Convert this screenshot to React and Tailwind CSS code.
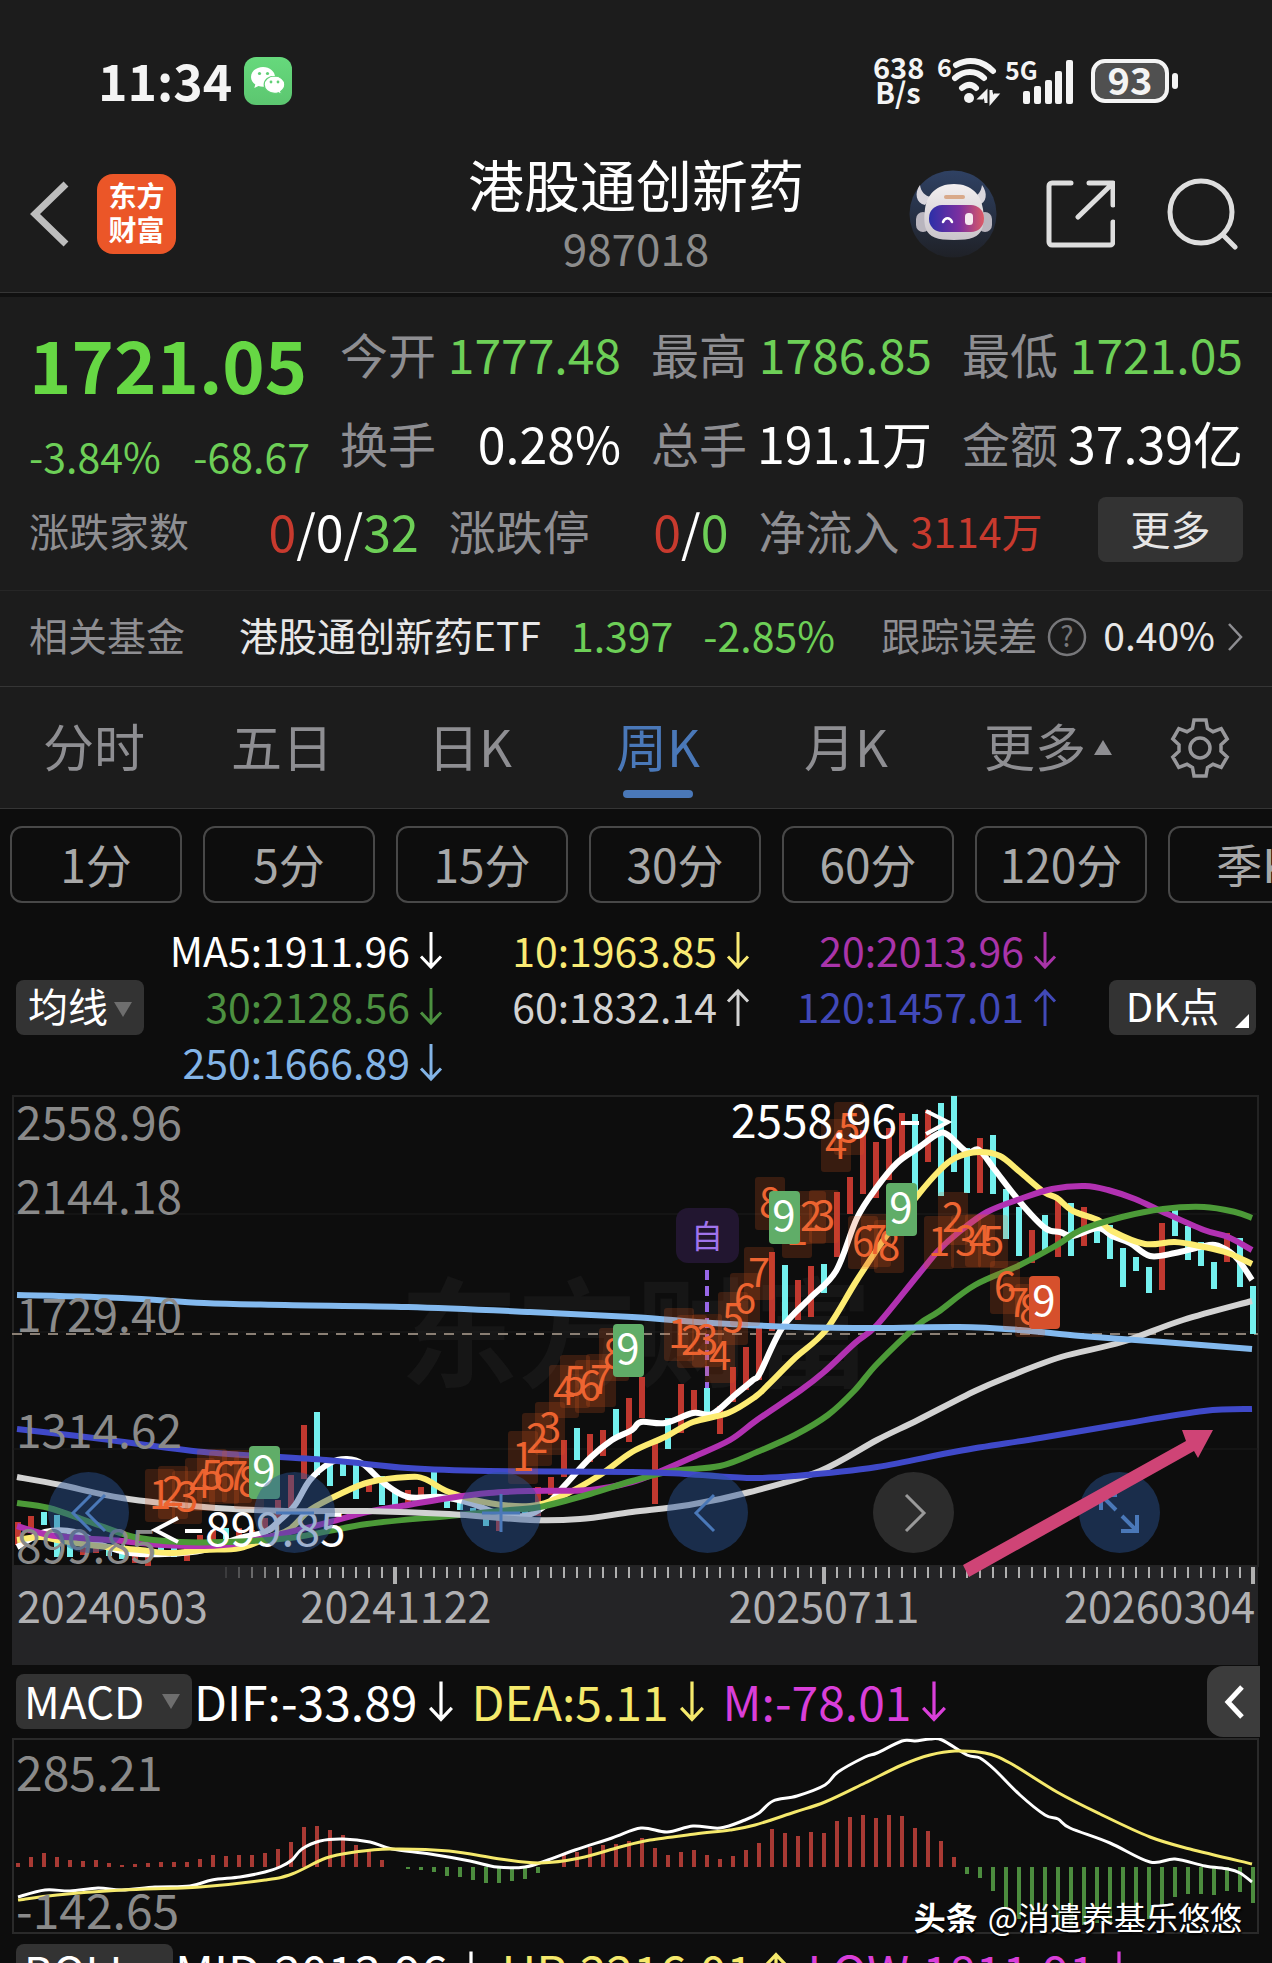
import React from "react";

const STEP = 13;
const barX = (i) => 18 + STEP * i;

/* [index, high, low, rising] */
const CANDLES = [
  [0, 1522, 1545, 1], [1, 1516, 1533, 1], [2, 1512, 1525, 0], [3, 1515, 1557, 0], [4, 1530, 1557, 0],
  [5, 1535, 1555, 1], [6, 1545, 1553, 1], [7, 1545, 1556, 0], [8, 1545, 1559, 0], [9, 1550, 1563, 1],
  [10, 1548, 1566, 1], [11, 1545, 1555, 0], [12, 1548, 1557, 0], [13, 1545, 1561, 1], [14, 1535, 1553, 1],
  [15, 1530, 1548, 1], [16, 1528, 1541, 0], [17, 1528, 1540, 1], [18, 1530, 1540, 1], [19, 1518, 1530, 1],
  [20, 1500, 1522, 1], [21, 1475, 1510, 1], [22, 1425, 1479, 1], [23, 1412, 1475, 0], [24, 1460, 1486, 0],
  [25, 1460, 1476, 0], [26, 1462, 1499, 0], [27, 1480, 1492, 1], [28, 1476, 1505, 0], [29, 1490, 1506, 0],
  [30, 1490, 1507, 1], [31, 1487, 1500, 1], [32, 1472, 1500, 0], [33, 1500, 1508, 0], [34, 1500, 1510, 0],
  [35, 1508, 1518, 0], [36, 1512, 1526, 0], [37, 1515, 1531, 1], [39, 1508, 1515, 0], [40, 1487, 1516, 1],
  [41, 1477, 1495, 1], [42, 1440, 1477, 1], [43, 1428, 1460, 0], [44, 1434, 1462, 1], [45, 1430, 1456, 1],
  [46, 1409, 1438, 0], [47, 1398, 1442, 1], [48, 1377, 1418, 1], [49, 1443, 1504, 1], [50, 1418, 1449, 0],
  [51, 1384, 1433, 1], [52, 1390, 1413, 1], [53, 1388, 1413, 0], [54, 1406, 1434, 1], [55, 1367, 1402, 1],
  [56, 1347, 1390, 1], [57, 1327, 1380, 1], [58, 1252, 1331, 1], [59, 1265, 1325, 0], [60, 1280, 1320, 1],
  [61, 1266, 1317, 1], [62, 1264, 1293, 0], [63, 1192, 1257, 1], [64, 1177, 1214, 1], [65, 1130, 1194, 1],
  [66, 1142, 1198, 1], [67, 1128, 1180, 1], [68, 1113, 1160, 1], [69, 1114, 1195, 0], [70, 1110, 1162, 1],
  [71, 1103, 1196, 0], [72, 1096, 1172, 0], [73, 1148, 1193, 0], [74, 1138, 1193, 1], [75, 1135, 1194, 0],
  [76, 1189, 1239, 0], [77, 1207, 1256, 0], [78, 1230, 1263, 1], [79, 1215, 1252, 0], [80, 1197, 1257, 1],
  [81, 1203, 1256, 0], [82, 1207, 1246, 1], [83, 1223, 1243, 0], [84, 1225, 1259, 0], [85, 1248, 1287, 0],
  [86, 1257, 1271, 0], [87, 1267, 1293, 0], [88, 1223, 1290, 1], [89, 1207, 1236, 0], [90, 1226, 1260, 0],
  [91, 1242, 1266, 0], [92, 1262, 1289, 0], [93, 1233, 1262, 1], [94, 1238, 1287, 0], [95, 1286, 1334, 0],
];

const AVERAGES = [
  { name: "5", color: "#ffffff", points: [[17, 1547], [45, 1532], [75, 1532], [102, 1545], [130, 1553], [165, 1554], [204, 1550], [240, 1538], [265, 1532], [280, 1520], [295, 1505], [310, 1480], [330, 1463], [347, 1459], [363, 1464], [385, 1484], [408, 1497], [440, 1497], [470, 1503], [500, 1514], [525, 1516], [545, 1506], [565, 1485], [590, 1458], [612, 1440], [632, 1430], [641, 1422], [665, 1423], [693, 1413], [712, 1414], [735, 1395], [753, 1380], [760, 1373], [782, 1328], [810, 1298], [836, 1271], [857, 1218], [877, 1187], [897, 1163], [918, 1148], [938, 1134], [948, 1135], [967, 1152], [979, 1150], [995, 1170], [1020, 1202], [1045, 1228], [1060, 1232], [1073, 1236], [1098, 1228], [1112, 1236], [1130, 1243], [1150, 1256], [1175, 1253], [1200, 1247], [1215, 1245], [1230, 1252], [1240, 1262], [1252, 1280]] },
  { name: "10", color: "#fdec72", points: [[17, 1540], [40, 1537], [57, 1540], [98, 1546], [140, 1550], [170, 1553], [204, 1550], [240, 1548], [270, 1537], [290, 1529], [310, 1510], [340, 1494], [370, 1482], [408, 1477], [425, 1479], [449, 1492], [489, 1503], [530, 1506], [560, 1497], [600, 1475], [632, 1452], [665, 1437], [693, 1422], [728, 1413], [755, 1397], [768, 1385], [795, 1358], [826, 1330], [857, 1280], [887, 1235], [918, 1195], [938, 1172], [955, 1158], [979, 1152], [1000, 1156], [1020, 1172], [1044, 1192], [1057, 1198], [1073, 1211], [1098, 1220], [1112, 1231], [1145, 1244], [1175, 1242], [1204, 1247], [1228, 1253], [1252, 1264]] },
  { name: "20", color: "#b131b1", points: [[17, 1526], [49, 1535], [80, 1538], [122, 1541], [163, 1545], [204, 1546], [240, 1543], [290, 1532], [330, 1522], [367, 1512], [408, 1505], [449, 1498], [489, 1493], [530, 1491], [590, 1490], [632, 1482], [661, 1471], [693, 1457], [730, 1440], [757, 1420], [801, 1390], [824, 1372], [855, 1343], [877, 1325], [918, 1275], [938, 1251], [959, 1232], [987, 1212], [1020, 1199], [1052, 1189], [1085, 1186], [1108, 1190], [1135, 1199], [1163, 1212], [1204, 1230], [1228, 1237], [1252, 1250]] },
  { name: "30", color: "#4c9a38", points: [[17, 1503], [49, 1508], [90, 1522], [134, 1537], [180, 1542], [224, 1542], [290, 1538], [367, 1524], [449, 1516], [510, 1510], [540, 1507], [590, 1494], [632, 1481], [672, 1471], [720, 1466], [757, 1452], [795, 1435], [828, 1415], [855, 1390], [877, 1364], [918, 1325], [938, 1312], [975, 1285], [1020, 1265], [1057, 1245], [1081, 1230], [1122, 1217], [1163, 1209], [1204, 1207], [1235, 1212], [1252, 1218]] },
  { name: "60", color: "#d2d2d2", points: [[17, 1477], [61, 1485], [122, 1498], [204, 1507], [286, 1511], [367, 1511], [449, 1514], [530, 1520], [580, 1519], [632, 1512], [689, 1505], [750, 1492], [820, 1471], [877, 1440], [918, 1420], [975, 1391], [1010, 1376], [1061, 1357], [1122, 1342], [1183, 1320], [1252, 1301]] },
  { name: "120", color: "#3f49c9", points: [[17, 1429], [102, 1439], [204, 1452], [326, 1460], [408, 1468], [489, 1471], [632, 1472], [685, 1474], [750, 1478], [795, 1476], [877, 1467], [959, 1451], [1040, 1438], [1122, 1424], [1204, 1411], [1252, 1409]] },
  { name: "250", color: "#83b9ee", points: [[17, 1295], [122, 1298], [204, 1303], [285, 1305], [408, 1307], [530, 1312], [632, 1317], [712, 1323], [795, 1327], [877, 1328], [959, 1327], [1020, 1330], [1081, 1336], [1163, 1342], [1252, 1349]] },
];

/* [digit, x, y] of the nine-turn counters */
const COUNTS = [
  [1, 160, 1495], [2, 173, 1492], [3, 187, 1497], [4, 200, 1484], [5, 212, 1475], [6, 224, 1477], [7, 237, 1476], [8, 249, 1482],
  [1, 523, 1457], [2, 537, 1439], [3, 550, 1428], [4, 564, 1391], [5, 575, 1381], [6, 590, 1386], [7, 601, 1380], [8, 614, 1354],
  [1, 679, 1334], [2, 692, 1341], [3, 707, 1340], [4, 720, 1356], [5, 733, 1318], [6, 745, 1299], [7, 759, 1273], [8, 770, 1203],
  [1, 797, 1231], [2, 811, 1217], [3, 824, 1216], [4, 836, 1145], [5, 849, 1128], [6, 863, 1242], [7, 876, 1240], [8, 889, 1246],
  [1, 939, 1242], [2, 953, 1218], [3, 966, 1241], [4, 980, 1240], [5, 993, 1241], [6, 1005, 1287], [7, 1018, 1303], [8, 1030, 1310],
];
const NINES = [
  [264, 1472, "#60ad68"], [628, 1350, "#60ad68"], [784, 1217, "#60ad68"], [901, 1209, "#60ad68"], [1044, 1302, "#d6502c"],
];

const MACD_BARS = [
  4, 10, 14, 10, 7, 6, 7, 4, 2, 3, 4, 5, 5, 5, 8, 12, 11, 12, 12, 14, 18, 25, 40, 41, 37, 32, 22, 18, 7, 0, -2, -3,
  -5, -9, -10, -13, -16, -16, -14, -12, -6, 0, 12, 15, 20, 22, 23, 26, 29, 19, 12, 15, 17, 12, 8, 11, 17, 24, 38, 34,
  31, 35, 34, 46, 50, 52, 49, 52, 51, 39, 36, 26, 10, -7, -11, -24, -40, -52, -55, -58, -60, -60, -58, -56, -55, -54,
  -53, -52, -38, -30, -27, -27, -28, -24, -25, -36,
];
const DIF = [[18, 1897], [45, 1890], [70, 1891], [98, 1888], [122, 1890], [155, 1887], [190, 1886], [212, 1880], [240, 1877], [265, 1872], [280, 1867], [292, 1860], [302, 1849], [320, 1841], [343, 1839], [370, 1842], [392, 1849], [430, 1854], [470, 1861], [497, 1867], [525, 1867], [548, 1860], [575, 1850], [612, 1838], [641, 1828], [667, 1832], [693, 1826], [720, 1828], [745, 1820], [759, 1813], [773, 1801], [797, 1796], [825, 1785], [838, 1772], [865, 1757], [877, 1753], [902, 1741], [915, 1741], [930, 1739], [942, 1740], [967, 1755], [980, 1758], [995, 1770], [1020, 1795], [1045, 1815], [1058, 1819], [1070, 1828], [1110, 1843], [1150, 1862], [1175, 1859], [1205, 1866], [1228, 1869], [1240, 1873], [1252, 1882]];
const DEA = [[18, 1900], [57, 1895], [122, 1890], [200, 1887], [265, 1880], [292, 1874], [326, 1858], [355, 1852], [390, 1849], [449, 1851], [500, 1859], [540, 1863], [580, 1858], [620, 1847], [650, 1840], [695, 1834], [730, 1830], [755, 1825], [795, 1812], [825, 1802], [865, 1783], [902, 1765], [930, 1755], [955, 1751], [985, 1753], [1010, 1763], [1057, 1792], [1100, 1814], [1150, 1837], [1190, 1849], [1252, 1864]];

/* Catmull-Rom spline through the points */
function curve(p) {
  let d = `M${p[0][0]} ${p[0][1]}`;
  for (let i = 0; i < p.length - 1; i++) {
    const a = p[i - 1] || p[i];
    const b = p[i];
    const c = p[i + 1];
    const e = p[i + 2] || c;
    d += `C${(b[0] + (c[0] - a[0]) / 6).toFixed(1)} ${(b[1] + (c[1] - a[1]) / 6).toFixed(1)} ${(c[0] - (e[0] - b[0]) / 6).toFixed(1)} ${(c[1] - (e[1] - b[1]) / 6).toFixed(1)} ${c[0]} ${c[1]}`;
  }
  return d;
}

function Arrow({ up = false, big = false }) {
  return (
    <svg viewBox="0 0 24 38" className={big ? "h-[42px] w-[26px] shrink-0" : "h-[38px] w-6 shrink-0"} fill="none" stroke="currentColor" strokeWidth="3">
      <path d={up ? "M12 38V3M2 13.500L12 3l10 10.500" : "M12 0v35M2 24.500L12 35l10-10.500"} />
    </svg>
  );
}

function StatusBar() {
  return (
    <div className="flex items-center justify-between pt-14 pr-[94px] pl-[98px] text-[#f4f4f4]">
      <div className="flex h-[50px] items-center gap-3">
        <span className="-mt-1 text-[50px] leading-[50px] font-bold">11:34</span>
        <svg viewBox="0 0 48 48" className="size-12">
          <defs>
            <linearGradient id="wx" x1="0" y1="0" x2="0" y2="1">
              <stop offset="0" stopColor="#66d97c" />
              <stop offset="1" stopColor="#5cc670" />
            </linearGradient>
          </defs>
          <rect width="48" height="48" rx="12" fill="url(#wx)" />
          <path d="M19 10c-6.700 0-12 4.400-12 9.900 0 3 1.700 5.700 4.300 7.500l-1 3.600 4.200-2c1.400.5 2.900.7 4.500.7 6.700 0 12-4.400 12-9.800S25.700 10 19 10z" fill="#fff" />
          <path d="M30.500 19c-5.700 0-10.300 3.800-10.300 8.600s4.600 8.700 10.300 8.700c1.300 0 2.600-.2 3.800-.6l3.300 1.800-.9-3c2.500-1.600 4.100-4.100 4.100-6.900 0-4.800-4.600-8.600-10.300-8.600z" fill="#fff" stroke="#60cf75" strokeWidth="1.200" />
          <circle cx="15.500" cy="16.500" r="1.600" fill="#60cf75" /><circle cx="23.500" cy="16.500" r="1.600" fill="#60cf75" />
          <circle cx="27" cy="25" r="1.400" fill="#60cf75" /><circle cx="34" cy="25" r="1.400" fill="#60cf75" />
        </svg>
      </div>
      <div className="flex h-[50px] items-center">
        <div className="-mt-1 flex w-[50px] flex-col text-center text-[29px] leading-[25px] font-bold">
          <span>638</span>
          <span>B/s</span>
        </div>
        <svg viewBox="0 0 62 48" className="ml-[14px] h-12 w-[62px] overflow-visible">
          <text x="0" y="20" fontSize="25" fontWeight="700" fill="#f4f4f4">6</text>
          <g fill="none" stroke="#f4f4f4" strokeWidth="6" strokeLinecap="round">
            <path d="M19 8c12-7 26-5 37 6" />
            <path d="M18 21c9-8 21-8 29 0" />
            <path d="M25 31c5-4 10-4 14 0" />
          </g>
          <circle cx="32" cy="41" r="5" fill="#f4f4f4" />
          <path d="M49 46V35l-6 6h3" stroke="#f4f4f4" strokeWidth="3" fill="#f4f4f4" />
          <path d="M54 33v12l6-7h-3" stroke="#f4f4f4" strokeWidth="3" fill="#f4f4f4" />
        </svg>
        <svg viewBox="0 0 70 48" className="ml-2 h-12 w-[70px] overflow-visible" fill="#f4f4f4">
          <text x="-2" y="23" fontSize="25" fontWeight="700">5G</text>
          <rect x="16" y="34" width="7" height="13" rx="2" />
          <rect x="27" y="29" width="7" height="18" rx="2" />
          <rect x="38" y="23" width="7" height="24" rx="2" />
          <rect x="48" y="14" width="7" height="33" rx="2" />
          <rect x="59" y="3" width="7" height="44" rx="2" />
        </svg>
        <div className="ml-[14px] flex items-center gap-[3px]">
          <div className="flex h-11 w-[78px] items-center justify-center rounded-[14px] border-4 border-[#f4f4f4] bg-[#505050] text-[38px] leading-9 font-bold">
            <span className="-mt-1">93</span>
          </div>
          <div className="h-4 w-[6px] rounded-full bg-[#f4f4f4]" />
        </div>
      </div>
    </div>
  );
}

function Header() {
  return (
    <header className="grid h-[187px] grid-cols-[1fr_auto_1fr] items-center border-b border-[#353535] pt-[30px]">
      <div className="flex items-center gap-7 pl-[30px]">
        <button type="button" aria-label="返回">
          <svg viewBox="0 0 39 66" className="h-[66px] w-[39px]" fill="none" stroke="#bdbdbd" strokeWidth="7">
            <path d="M36 3L5 33l31 30" />
          </svg>
        </button>
        <div className="flex h-20 w-[79px] flex-col items-center justify-center rounded-[16px] bg-[#eb5628] pb-1 text-[28px] leading-[34px] font-bold text-white">
          <span>东方</span>
          <span>财富</span>
        </div>
      </div>
      <div className="flex flex-col items-center">
        <h1 className="text-[56px] leading-[66px] text-white">港股通创新药</h1>
        <span className="text-[44px] leading-[62px] text-[#8c8c8c]">987018</span>
      </div>
      <div className="flex items-center justify-end pr-[33px]">
        <button type="button" aria-label="智能助手">
          <svg viewBox="0 0 88 88" className="size-[88px]">
            <defs>
              <linearGradient id="halo" x1="0" y1="0" x2="0" y2="1">
                <stop offset="0" stopColor="#2f4163" />
                <stop offset="1" stopColor="#1f2127" />
              </linearGradient>
              <linearGradient id="visor" x1="0" y1="0" x2="1" y2="0">
                <stop offset="0" stopColor="#2b2fa8" />
                <stop offset=".55" stopColor="#7b2fa0" />
                <stop offset="1" stopColor="#dc5a66" />
              </linearGradient>
              <linearGradient id="shell" x1="0" y1="0" x2="0" y2="1">
                <stop offset="0" stopColor="#f3eff0" />
                <stop offset="1" stopColor="#c9c4ca" />
              </linearGradient>
            </defs>
            <circle cx="44" cy="44" r="43.500" fill="url(#halo)" />
            <path d="M11 15c-6 8-4 18 5 20l6-8c-6-1-10-5-11-12zM73 15c6 8 5 18-4 20l-6-8c6-1 9-5 10-12z" fill="#d9d6dd" />
            <rect x="7" y="42" width="14" height="20" rx="7" fill="#b9b5be" />
            <rect x="69" y="42" width="14" height="20" rx="7" fill="#b9b5be" />
            <path d="M45 14c18 0 27 11 29 25 1 7 1 15-1 20-3 8-11 11-28 11s-25-3-28-11c-2-5-2-13-1-20 2-14 11-25 29-25z" fill="url(#shell)" />
            <rect x="20" y="35" width="55" height="27" rx="13" fill="url(#visor)" />
            <path d="M34 52c2-5 7-5 9 0" stroke="#fff" strokeWidth="2.500" fill="none" strokeLinecap="round" />
            <rect x="56" y="43" width="8" height="12" rx="3.500" fill="#f6e9ef" />
            <path d="M37 27h17" stroke="#d9a98a" strokeWidth="4" strokeLinecap="round" />
          </svg>
        </button>
        <button type="button" aria-label="分享" className="ml-12">
          <svg viewBox="0 0 70 70" className="size-[70px]" fill="none" stroke="#dedede" strokeWidth="5" strokeLinejoin="round" strokeLinecap="round">
            <path d="M26 4H7a3 3 0 0 0-3 3v56a3 3 0 0 0 3 3h58a3 3 0 0 0 3-3V43" />
            <path d="M44 4h24v22M66 6L33 38" />
          </svg>
        </button>
        <button type="button" aria-label="搜索" className="ml-[52px]">
          <svg viewBox="0 0 72 72" className="size-[72px]" fill="none" stroke="#dedede" strokeWidth="5" strokeLinecap="round">
            <circle cx="34" cy="34" r="31" />
            <path d="M56 57l12 12" />
          </svg>
        </button>
      </div>
    </header>
  );
}

function Stat({ label, value, tone, big = false }) {
  return (
    <div className="flex items-center justify-between text-[48px] leading-[60px] whitespace-nowrap">
      <span className="text-[#8e8e92]">{label}</span>
      <span className={(big ? "text-[50px] " : "") + tone}>{value}</span>
    </div>
  );
}

const GREEN = "text-[#6dcf57]";

function Quote() {
  return (
    <section className="border-b border-[#262626] px-[29px] pt-[26px] pb-7">
      <div className="grid grid-cols-4 gap-x-[30px]">
        <div className="flex flex-col">
          <strong className="text-[72px] leading-20 font-bold text-[#66d744]">1721.05</strong>
          <div className="mt-[26px] flex justify-between text-[41px] leading-[52px] text-[#6dcf57]">
            <span>-3.84%</span>
            <span>-68.67</span>
          </div>
        </div>
        <div className="flex flex-col gap-[29px]">
          <Stat label="今开" value="1777.48" tone={GREEN} />
          <Stat label="换手" value="0.28%" tone="text-white" big />
        </div>
        <div className="flex flex-col gap-[29px]">
          <Stat label="最高" value="1786.85" tone={GREEN} />
          <Stat label="总手" value="191.1万" tone="text-white" big />
        </div>
        <div className="flex flex-col gap-[29px]">
          <Stat label="最低" value="1721.05" tone={GREEN} />
          <Stat label="金额" value="37.39亿" tone="text-white" big />
        </div>
      </div>
      <div className="mt-4 grid grid-cols-[390fr_280fr_310fr_145fr] items-center gap-x-[30px] text-[47px] leading-[60px] whitespace-nowrap">
        <div className="flex items-center justify-between">
          <span className="text-[40px] text-[#8e8e92]">涨跌家数</span>
          <span className="text-[50px] text-white"><span className="text-[#c83a2e]">0</span>/0/<span className={GREEN}>32</span></span>
        </div>
        <div className="flex items-center justify-between">
          <span className="text-[#8e8e92]">涨跌停</span>
          <span className="text-[50px] text-white"><span className="text-[#c83a2e]">0</span>/<span className={GREEN}>0</span></span>
        </div>
        <div className="flex items-center gap-[11px]">
          <span className="text-[#8e8e92]">净流入</span>
          <span className="text-[41px] text-[#c83a2e]">3114万</span>
        </div>
        <button type="button" className="h-[65px] rounded-lg bg-[#333333] pb-1 text-[40px] leading-[60px] text-[#e6e6e6]">更多</button>
      </div>
    </section>
  );
}

function FundRow() {
  return (
    <a href="#fund" className="flex h-24 items-center border-b border-[#353535] pr-[29px] pb-2 pl-[29px] text-[39px] whitespace-nowrap">
      <span className="text-[#8e8e92]">相关基金</span>
      <span className="ml-[54px] text-[#e8e8e8]">港股通创新药ETF</span>
      <span className="ml-[30px] text-[41px] text-[#6dcf57]">1.397</span>
      <span className="ml-[30px] text-[41px] text-[#6dcf57]">-2.85%</span>
      <span className="ml-auto text-[#8e8e92]">跟踪误差</span>
      <svg viewBox="0 0 40 40" className="mt-1 ml-[10px] size-10 overflow-visible">
        <circle cx="20" cy="20" r="18" fill="none" stroke="#77777a" strokeWidth="2.500" />
        <text x="20" y="30" fontSize="28" textAnchor="middle" fill="#77777a">?</text>
      </svg>
      <span className="ml-4 text-[#e8e8e8]">0.40%</span>
      <svg viewBox="0 0 16 28" className="mt-1 ml-3 h-7 w-4" fill="none" stroke="#8e8e92" strokeWidth="2.500">
        <path d="M2 1l12 13L2 27" />
      </svg>
    </a>
  );
}

function Tabs() {
  const base = "relative flex h-full items-center justify-center pb-1";
  return (
    <nav className="grid h-[122px] grid-cols-[188fr_188fr_188fr_188fr_188fr_216fr_116fr] items-center border-b border-[#353535] text-[51px] text-[#8e8e92]">
      <button type="button" className={base}>分时</button>
      <button type="button" className={base}>五日</button>
      <button type="button" className={base}>日K</button>
      <button type="button" className={base + " text-[#4a78b8]"}>
        周K
        <span className="absolute bottom-[10px] h-2 w-[70px] rounded-full bg-[#4a78b8]" />
      </button>
      <button type="button" className={base}>月K</button>
      <button type="button" className={base}>
        更多
        <svg viewBox="0 0 18 15" className="mt-1 ml-2 h-[15px] w-[18px]" fill="#8e8e92"><path d="M9 0l9 15H0z" /></svg>
      </button>
      <button type="button" aria-label="设置" className="flex h-full items-center pl-[14px]">
        <svg viewBox="0 0 60 60" className="size-[60px]" fill="none" stroke="#98989b" strokeWidth="3.500" strokeLinejoin="miter">
          <path d="M24 2h12l1.500 8.500 5.500 3.200 8.200-3 6 10.300-6.200 5.800v6.400l6.200 5.800-6 10.300-8.200-3-5.500 3.200L36 58H24l-1.500-8.500-5.500-3.200-8.200 3-6-10.300 6.200-5.800v-6.400l-6.200-5.800 6-10.300 8.200 3 5.500-3.200z" />
          <circle cx="30" cy="30" r="10" />
        </svg>
      </button>
    </nav>
  );
}

function Periods() {
  const items = ["1分", "5分", "15分", "30分", "60分", "120分", "季K"];
  return (
    <div className="flex shrink-0 gap-[21px] overflow-hidden pt-[17px] pl-[10px]">
      {items.map((t) => (
        <button key={t} type="button" className="flex h-[77px] w-[172px] shrink-0 items-center justify-center rounded-xl border-2 border-[#484848] pb-1 text-[46px] leading-[60px] text-[#a8a8a8]">
          {t}
        </button>
      ))}
    </div>
  );
}

function Legend() {
  const cells = [
    ["MA5:1911.96", false, "text-white"],
    ["10:1963.85", false, "text-[#f9ea74]"],
    ["20:2013.96", false, "text-[#a934a9]"],
    ["30:2128.56", false, "text-[#4c9040]"],
    ["60:1832.14", true, "text-[#d2d2d2]"],
    ["120:1457.01", true, "text-[#4149b8]"],
    ["250:1666.89", false, "text-[#83b4e6]"],
  ];
  return (
    <div className="flex shrink-0 items-center pt-5 pr-4 pb-1 pl-4">
      <button type="button" className="flex h-[55px] w-32 shrink-0 items-center gap-[6px] rounded-lg bg-[#333333] pb-1 pl-3 text-[40px] leading-[50px] text-white">
        均线
        <svg viewBox="0 0 18 15" className="mt-2 h-[15px] w-[18px]" fill="#6e6e6e"><path d="M0 0h18L9 15z" /></svg>
      </button>
      <div className="-ml-2 grid flex-1 grid-cols-3">
        {cells.map(([text, up, tone]) => (
          <div key={text} className={"flex h-14 items-center justify-end gap-[9px] text-[41px] leading-[56px] whitespace-nowrap " + tone}>
            <span className="-mt-1">{text}</span>
            <Arrow up={up} />
          </div>
        ))}
      </div>
      <button type="button" className="relative ml-[52px] h-[55px] w-[147px] shrink-0 rounded-lg bg-[#333333] pr-5 pb-1 text-[40px] leading-[50px] text-white">
        DK点
        <svg viewBox="0 0 14 14" className="absolute right-[7px] bottom-[7px] size-[14px]" fill="#fff"><path d="M14 0v14H0z" /></svg>
      </button>
    </div>
  );
}

const ROUND = "flex size-[81px] items-center justify-center rounded-full bg-[#2a5596]/45";

function PriceChart() {
  const ticks = [];
  for (let i = 16; i <= 95; i++) ticks.push(i);
  return (
    <div className="relative mx-3 shrink-0">
      <svg viewBox="12 1095 1248 570" className="block h-auto w-full">
        <text x="636" y="1378" fontSize="118" fontWeight="700" textAnchor="middle" fill="#161616">东方财富</text>
        <rect x="13" y="1096" width="1245" height="470" fill="none" stroke="#232323" strokeWidth="2" />
        <path d="M13 1214H1258M13 1332H1258M13 1449H1258" stroke="#1d1d1d" strokeWidth="1" />
        <path d="M12 1334H1258" stroke="#8a7f74" strokeWidth="2" strokeDasharray="10 8" />
        <path d="M707 1270V1394" stroke="#9767e6" strokeWidth="4" strokeDasharray="10 6" />
        {CANDLES.map(([i, top, low, up]) => (
          <rect key={i} x={barX(i) - 3} y={top} width="6" height={low - top} fill={up ? "#c0382f" : "#74f0ee"} />
        ))}
        <g fill="none" strokeWidth="6" strokeLinejoin="round">
          {AVERAGES.map((a) => (
            <path key={a.name} d={curve(a.points)} stroke={a.color} />
          ))}
        </g>
        <g fontSize="40" textAnchor="middle" fill="#ee6532">
          {COUNTS.map(([n, x, y], k) => (
            <g key={k}>
              <rect x={x - 15} y={y - 26} width="30" height="53" rx="3" fill="#e85a1c" fillOpacity=".2" />
              <text x={x} y={y + 14}>{n}</text>
            </g>
          ))}
        </g>
        {NINES.map(([x, y, color]) => (
          <g key={x}>
            <rect x={x - 15} y={y - 26} width="31" height="53" rx="4" fill={color} />
            <text x={x} y={y + 14} fontSize="42" textAnchor="middle" fill="#fff">9</text>
          </g>
        ))}
        <rect x="676" y="1208" width="63" height="55" rx="12" fill="#221630" />
        <text x="707" y="1248" fontSize="32" textAnchor="middle" fill="#a074ec">自</text>
        <g fontSize="46" fill="#8a8a8a">
          <text x="16" y="1140">2558.96</text>
          <text x="16" y="1214">2144.18</text>
          <text x="16" y="1332">1729.40</text>
          <text x="16" y="1448">1314.62</text>
          <text x="16" y="1563">899.85</text>
        </g>
        <g fontSize="46" fill="#fff">
          <text x="731" y="1138">2558.96</text>
          <text x="205" y="1546">899.85</text>
        </g>
        <path d="M901 1123h18M926 1111l22 11-22 12M178 1518l-23 12 23 12M185 1531h17" fill="none" stroke="#fff" strokeWidth="4" />
        <rect x="12" y="1566" width="1246" height="99" fill="#242426" />
        {ticks.map((i) => {
          const major = i === 29 || i === 62 || i === 95;
          return (
            <rect key={i} x={barX(i) - (major ? 2 : 1)} y="1567" width={major ? 4 : 2} height={major ? 17 : 11} fill="#b0b0b0" opacity={Math.min(1, (i - 15) / 6)} />
          );
        })}
        <g fontSize="43" fill="#b0b0b2">
          <text x="17" y="1623">20240503</text>
          <text x="396" y="1623" textAnchor="middle">20241122</text>
          <text x="824" y="1623" textAnchor="middle">20250711</text>
          <text x="1255" y="1623" textAnchor="end">20260304</text>
        </g>
      </svg>
      <div className="absolute top-[377px] right-[100px] left-9 flex justify-between">
        <button type="button" aria-label="快退" className={ROUND}>
          <svg viewBox="0 0 40 40" className="size-10" fill="none" stroke="#4a78b8" strokeWidth="3"><path d="M22 2L4 20l18 18M36 2L18 20l18 18" /></svg>
        </button>
        <button type="button" aria-label="缩小" className={ROUND}>
          <svg viewBox="0 0 40 40" className="size-10" stroke="#4a78b8" strokeWidth="3"><path d="M1 20h38" /></svg>
        </button>
        <button type="button" aria-label="放大" className={ROUND}>
          <svg viewBox="0 0 40 40" className="size-10" stroke="#4a78b8" strokeWidth="3"><path d="M1 20h38M20 1v38" /></svg>
        </button>
        <button type="button" aria-label="左移" className={ROUND}>
          <svg viewBox="0 0 40 40" className="size-10" fill="none" stroke="#4a78b8" strokeWidth="3"><path d="M27 2L9 20l18 18" /></svg>
        </button>
        <button type="button" aria-label="右移" className="flex size-[81px] items-center justify-center rounded-full bg-[#2c2c2c]">
          <svg viewBox="0 0 40 40" className="size-10" fill="none" stroke="#9a9a9a" strokeWidth="3"><path d="M13 2l18 18-18 18" /></svg>
        </button>
        <button type="button" aria-label="全屏" className={ROUND}>
          <svg viewBox="0 0 40 40" className="size-10" fill="none" stroke="#4a78b8" strokeWidth="4"><path d="M17 17L3 3M2 17V2h16M23 23l14 14M38 22v16H22" /></svg>
        </button>
      </div>
      <svg viewBox="12 1095 1248 570" className="pointer-events-none absolute inset-0 h-auto w-full">
        <path d="M963 1565L1186 1441L1182 1430H1213L1198 1458L1194 1451L969 1577Z" fill="#cf4476" />
      </svg>
    </div>
  );
}

function IndicatorRow({ name, width, values }) {
  return (
    <div className="flex items-center pl-4 text-[48px] leading-[54px] whitespace-nowrap">
      <button type="button" className={"flex h-[55px] shrink-0 items-center justify-between rounded-lg bg-[#333333] pr-3 pl-2 text-[44px] leading-[50px] text-white " + width}>
        <span className="-mt-1">{name}</span>
        <svg viewBox="0 0 18 15" className="h-[15px] w-[18px]" fill="#6e6e6e"><path d="M0 0h18L9 15z" /></svg>
      </button>
      <div className="flex gap-[18px] pl-[2px]">
        {values.map(([text, up, tone]) => (
          <div key={text} className={"flex items-center gap-[10px] " + tone}>
            <span className="-mt-1">{text}</span>
            <Arrow up={up} big />
          </div>
        ))}
      </div>
    </div>
  );
}

function MacdChart() {
  return (
    <div className="relative mx-3 shrink-0">
      <svg viewBox="12 1738 1248 196" className="block h-auto w-full">
        <rect x="13" y="1739" width="1245" height="194" fill="none" stroke="#2a2a2a" strokeWidth="2" />
        {MACD_BARS.map((h, i) => (
          <rect key={i} x={barX(i) - 2} y={h > 0 ? 1867 - h : 1867} width="4" height={Math.abs(h)} fill={h > 0 ? "#a93a34" : "#4c8c3e"} />
        ))}
        <g fill="none" strokeWidth="3" strokeLinejoin="round">
          <path d={curve(DIF)} stroke="#fff" />
          <path d={curve(DEA)} stroke="#f5e96c" />
        </g>
        <g fontSize="48" fill="#8a8a8a">
          <text x="16" y="1791">285.21</text>
          <text x="16" y="1929">-142.65</text>
        </g>
      </svg>
      <div className="absolute right-[18px] bottom-0 flex items-center gap-[10px] text-[32px] leading-9 text-white [text-shadow:1px_2px_2px_#000]">
        <strong>头条</strong>
        <span>@消遣养基乐悠悠</span>
      </div>
    </div>
  );
}

export default function App() {
  return (
    <main className="flex h-screen flex-col overflow-hidden bg-[#0d0d0d] font-['Noto_Sans_CJK_SC',sans-serif] text-white">
      <div className="shrink-0 bg-[#1c1c1c]">
        <StatusBar />
        <Header />
        <div className="h-1 bg-[#101010]" />
        <Quote />
        <FundRow />
        <Tabs />
      </div>
      <Periods />
      <Legend />
      <PriceChart />
      <div className="relative h-[73px] shrink-0 pt-[9px]">
        <IndicatorRow
          name="MACD"
          width="w-44"
          values={[["DIF:-33.89", false, "text-white"], ["DEA:5.11", false, "text-[#f5e96c]"], ["M:-78.01", false, "text-[#d93fd9]"]]}
        />
        <button type="button" aria-label="展开" className="absolute top-px right-3 flex h-[71px] w-[53px] items-center justify-center rounded-l-2xl bg-[#3c3c3c]">
          <svg viewBox="0 0 20 34" className="h-[34px] w-5" fill="none" stroke="#fff" strokeWidth="5"><path d="M18 2L4 17l14 15" /></svg>
        </button>
      </div>
      <MacdChart />
      <div className="shrink-0 pt-[10px]">
        <IndicatorRow
          name="BOLL"
          width="w-[157px]"
          values={[["MID:2013.96", false, "text-white"], ["UP:2216.01", true, "text-[#f5e96c]"], ["LOW:1811.91", false, "text-[#d93fd9]"]]}
        />
      </div>
    </main>
  );
}
